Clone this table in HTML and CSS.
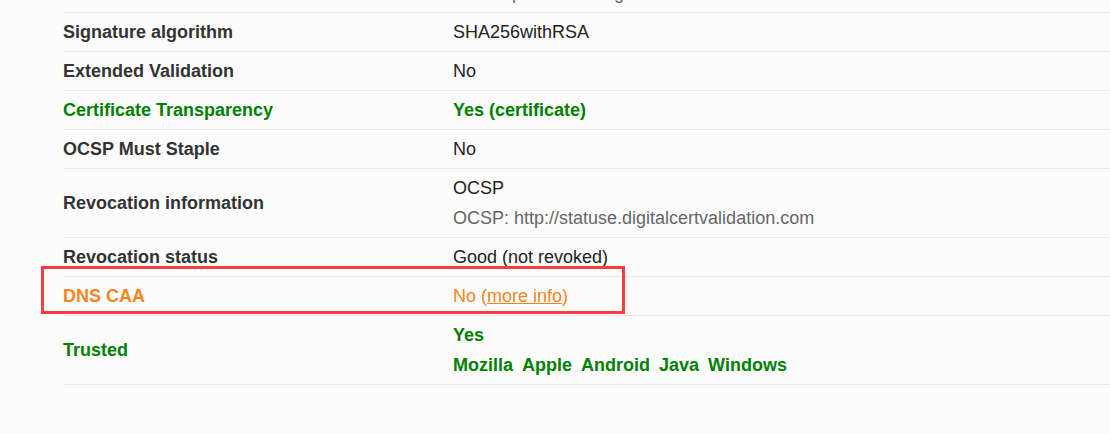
FILE: index.html
```html
<!DOCTYPE html>
<html>
<head>
<meta charset="utf-8">
<link rel="stylesheet" href="styles.css">
</head>
<body>
<div class="page">
  <table class="cert">
    <colgroup>
      <col class="col-label">
      <col class="col-value">
    </colgroup>
    <tr>
      <td class="label">Issuer</td>
      <td class="value">
        <div class="line">GeoTrust CN RSA CA G1</div>
        <div class="line sub">AIA: http://cacerts.digicert.cn/GeoTrustCNRSACAG1.crt</div>
      </td>
    </tr>
    <tr>
      <td class="label">Signature algorithm</td>
      <td class="value"><div class="line">SHA256withRSA</div></td>
    </tr>
    <tr>
      <td class="label">Extended Validation</td>
      <td class="value"><div class="line">No</div></td>
    </tr>
    <tr class="good">
      <td class="label">Certificate Transparency</td>
      <td class="value bold"><div class="line">Yes (certificate)</div></td>
    </tr>
    <tr>
      <td class="label">OCSP Must Staple</td>
      <td class="value"><div class="line">No</div></td>
    </tr>
    <tr>
      <td class="label">Revocation information</td>
      <td class="value">
        <div class="line">OCSP</div>
        <div class="line sub">OCSP: http://statuse.digitalcertvalidation.com</div>
      </td>
    </tr>
    <tr>
      <td class="label">Revocation status</td>
      <td class="value"><div class="line">Good (not revoked)</div></td>
    </tr>
    <tr class="warn">
      <td class="label">DNS CAA</td>
      <td class="value"><div class="line">No (<a href="#">more info</a>)</div></td>
    </tr>
    <tr class="good last">
      <td class="label">Trusted</td>
      <td class="value bold">
        <div class="line">Yes</div>
        <div class="line stores"><span>Mozilla</span><span>Apple</span><span>Android</span><span>Java</span><span>Windows</span></div>
      </td>
    </tr>
  </table>
  <div class="highlight"></div>
</div>
</body>
</html>
```

FILE: styles.css
```css
html, body {
  margin: 0;
  padding: 0;
  background: #fcfcfc;
  overflow: hidden;
}

.page {
  position: relative;
  width: 1110px;
  height: 434px;
  overflow: hidden;
  font-family: "Liberation Sans", Arial, sans-serif;
  font-size: 18px;
  color: #222;
}

.cert {
  margin-top: -57px;
  margin-left: 63px;
  width: calc(100% - 63px);
  border-collapse: collapse;
  table-layout: fixed;
}

.col-label {
  width: 390px;
}

.cert td {
  border-top: 1px solid #e9e9e9;
  padding: 8px 0;
  line-height: 22px;
}

.cert tr.last td {
  border-bottom: 1px solid #e9e9e9;
}

.label {
  font-weight: bold;
  color: #333;
  vertical-align: middle;
}

.value {
  vertical-align: top;
}

.line + .line {
  margin-top: 8px;
}

.sub {
  color: #666;
  white-space: nowrap;
}

.bold {
  font-weight: bold;
}

.good .label,
.good .value {
  color: #008000;
}

.warn .label,
.warn .value,
.warn a {
  color: #f7841f;
}

.warn a {
  text-decoration: underline;
}

.stores span + span {
  margin-left: 9px;
}

.highlight {
  position: absolute;
  left: 41px;
  top: 266px;
  width: 578px;
  height: 42px;
  border: 3px solid #f63c3c;
}
```
